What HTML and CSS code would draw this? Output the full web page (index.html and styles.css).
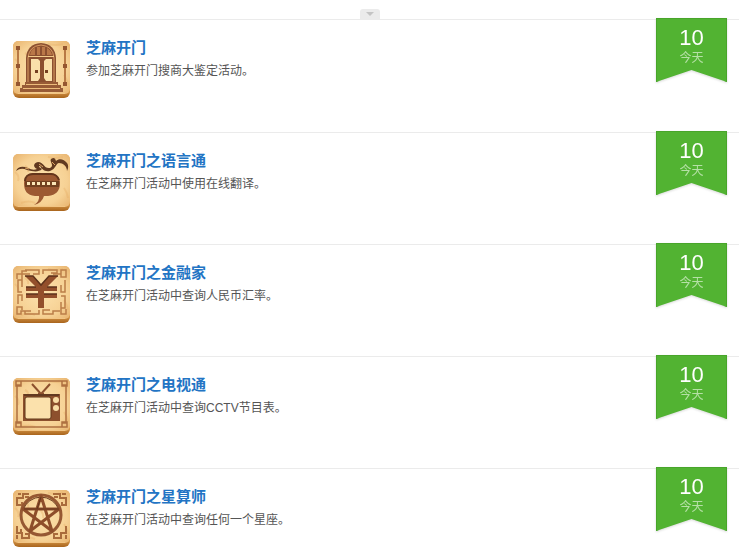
FILE: index.html
```
<!DOCTYPE html>
<html lang="zh-CN">
	<head>
		<meta charset="UTF-8">
		<meta name="viewport" content="width=device-width, initial-scale=1">
		<title>芝麻开门</title>
		<link rel="stylesheet" href="styles.css">
	</head>

	<body>
		<!-- shared wooden tile for the badges -->
		<svg class="defs" width="0" height="0" aria-hidden="true">
			<defs>
				<linearGradient id="edge" x1="0" y1="0" x2="0" y2="1">
					<stop offset="0" stop-color="#e0a85c"/>
					<stop offset="0.9" stop-color="#cf8f42"/>
					<stop offset="1" stop-color="#a9651d"/>
				</linearGradient>
				<radialGradient id="wood" cx="0.5" cy="0.5" r="0.75">
					<stop offset="0" stop-color="#fce2ad"/>
					<stop offset="0.6" stop-color="#f6d194"/>
					<stop offset="1" stop-color="#e5ad66"/>
				</radialGradient>
				<symbol id="tile" viewBox="0 0 57 57">
					<rect width="57" height="57" rx="6" fill="url(#edge)"/>
					<rect width="57" height="53" rx="5" fill="url(#wood)"/>
					<path d="M5 52.500H52" stroke="#f2c584" fill="none"/>
					<path d="M2 18q5 4 3 9M51 34q3 4 4 10M8 49q8-3 14 0M35 3q8 2 15 0M26 19q5 4 4 9M12 12q4 2 3 6" stroke="#e6ad63" stroke-width="2" opacity="0.35" fill="none"/>
				</symbol>
			</defs>
		</svg>

		<div class="header">
			<button class="toggle" type="button" aria-label="收起"></button>
		</div>

		<ul class="badges">
			<li class="badge">
				<svg class="icon" viewBox="0 0 57 57" aria-hidden="true">
					<use href="#tile"/>
					<path d="M13 41V17Q14 3 28 2Q42 3 43 17V41Z" fill="#8c5030"/>
					<path d="M15 41V17Q16 5 28 4Q40 5 41 17V41" fill="none" stroke="#d99b63"/>
					<path d="M17 14Q18 8 22 7V14ZM24 6H27V14H24ZM29 6H32V14H29ZM34 7Q38 9 39 14H34Z" fill="#ba7848"/>
					<path d="M15 15.500H41" stroke="#f4cc8b"/>
					<path d="M18 18H25L27 20V37L25 40H18ZM31 20L33 18H39V40H33L31 37Z" fill="#fae0aa"/>
					<path d="M22 29h3v3h-3zM32 29h3v3h-3z" fill="#754021"/>
					<path d="M12 41H45V44H48V47H50V51H7V47H9V44H12Z" fill="#985b36"/>
					<path d="M13 43.500H44M10 47.500H47" stroke="#edbc7b"/>
					<path d="M5 5V45M52 5V45" stroke="#b87945" stroke-width="2"/>
					<path d="M3 5h4v4H3zM3 23h4v4H3zM3 41h4v4H3zM50 5h4v4h-4zM50 23h4v4h-4zM50 41h4v4h-4z" fill="#955630"/>
				</svg>
				<div class="info">
					<h3><a href="#">芝麻开门</a></h3>
					<p>参加芝麻开门搜商大鉴定活动。</p>
				</div>
				<div class="ribbon">
					<div class="ribbon-body"><strong>10</strong><span>今天</span></div>
				</div>
			</li>

			<li class="badge">
				<svg class="icon" viewBox="0 0 57 57" aria-hidden="true">
					<use href="#tile"/>
					<path d="M3 17C5 12 10 12 15 14Q20 17 24 15C20 13 20 9 25 8C31 8 31 15 37 14C42 12 36 7 38 5Q42 2 43 7C46 4 51 5 54 9C56 12 55 15 54 17C54 12 50 9 46 9C43 9 43 15 37 17C31 18 29 15 27 12Q24 12 29 15C25 19 19 17 14 16Q8 13 3 17Z" fill="#623a20"/>
					<path d="M26 10l4 3M39 8l3 3M12 14l4 1" stroke="#dea563"/>
					<path d="M20 19H38C44 20 47 24 47 29C47 37 43 41 35 42H31Q29 49 21 51Q27 47 26 42H22C14 41 11 37 11 29C11 24 14 20 20 19Z" fill="#9c5932"/>
					<path d="M12 27C12 23 15 20 20 20H38C42 20 45 23 46 26" fill="none" stroke="#65361c" stroke-width="2"/>
					<path d="M12 27H46V33H12Z" fill="#71401f"/>
					<path d="M14 28h3v3h-3zM19 28h3v3h-3zM24 28h3v3h-3zM29 28h3v3h-3zM34 28h3v3h-3zM39 28h4v3h-4z" fill="#fbe6b7"/>
				</svg>
				<div class="info">
					<h3><a href="#">芝麻开门之语言通</a></h3>
					<p>在芝麻开门活动中使用在线翻译。</p>
				</div>
				<div class="ribbon">
					<div class="ribbon-body"><strong>10</strong><span>今天</span></div>
				</div>
			</li>

			<li class="badge">
				<svg class="icon" viewBox="0 0 57 57" aria-hidden="true">
					<use href="#tile"/>
					<path d="M17 8H9V5H14M12 4H26V8H20M30 8V4H44V7H38M40 8H48V4H53V11H48V8M52 14V26H48V19M48 30H52V42H48V36M48 39V48H53V43M47 45H40V48H30V44H37M26 44V48H12V45H18M16 45H8V48H4V41H9V44M5 38V29H9V35M9 26H5V14H9V21M9 17V8H4V13" fill="none" stroke="#bb7e48" stroke-width="1.500"/>
					<path d="M12 10H20L28 19L36 10H45L34 21H44V25H31V28H44V32H31V42H25V32H13V28H25V25H13V21H23Z" fill="#934f2b"/>
					<path d="M12 10H20L28 19L36 10H45M13 21H23M34 21H44M13 28H25M31 28H44" fill="none" stroke="#5d321b" stroke-width="1.500"/>
				</svg>
				<div class="info">
					<h3><a href="#">芝麻开门之金融家</a></h3>
					<p>在芝麻开门活动中查询人民币汇率。</p>
				</div>
				<div class="ribbon">
					<div class="ribbon-body"><strong>10</strong><span>今天</span></div>
				</div>
			</li>

			<li class="badge">
				<svg class="icon" viewBox="0 0 57 57" aria-hidden="true">
					<use href="#tile"/>
					<path d="M8 3H49V7H53V45H49V49H8V45H4V7H8ZM3 3H8V8H3ZM49 3H54V8H49ZM3 44H8V49H3ZM49 44H54V49H49Z" fill="none" stroke="#ae7040" stroke-width="1.500"/>
					<path d="M19 6L28 16L37 6M25 16H31" fill="none" stroke="#8d502d" stroke-width="2"/>
					<path d="M10 16H47V43H10Z" fill="#8d502d"/>
					<path d="M11 17H46" stroke="#623920" stroke-width="2"/>
					<rect x="12" y="19" width="26" height="22" rx="2" fill="#fbe1ac" stroke="#603619"/>
					<circle cx="43" cy="22" r="3" fill="#f9dda5"/>
					<circle cx="43" cy="30" r="3" fill="#f9dda5"/>
				</svg>
				<div class="info">
					<h3><a href="#">芝麻开门之电视通</a></h3>
					<p>在芝麻开门活动中查询CCTV节目表。</p>
				</div>
				<div class="ribbon">
					<div class="ribbon-body"><strong>10</strong><span>今天</span></div>
				</div>
			</li>

			<li class="badge">
				<svg class="icon" viewBox="0 0 57 57" aria-hidden="true">
					<use href="#tile"/>
					<path d="M16 4H10V8H4V15H9V12M5 4H8M40 4H47V8H53V15H49V12M49 4H53M4 36V43H9V48H16V44H12M4 45V49M53 36V43H48V48H41V44H45M53 45V49M12 7H16M41 7H45M8 39V42" fill="none" stroke="#a96b3b" stroke-width="2"/>
					<circle cx="28" cy="25" r="20" fill="none" stroke="#965832" stroke-width="3"/>
					<path d="M10 20A19 19 0 0 1 46 20" fill="none" stroke="#68391d"/>
					<path d="M28 6L39 41L10 19H46L17 41Z" fill="none" stroke="#8e4e2a" stroke-width="3" stroke-linejoin="round"/>
					<path d="M11 19H46M28 7L24 19" fill="none" stroke="#65371d"/>
				</svg>
				<div class="info">
					<h3><a href="#">芝麻开门之星算师</a></h3>
					<p>在芝麻开门活动中查询任何一个星座。</p>
				</div>
				<div class="ribbon">
					<div class="ribbon-body"><strong>10</strong><span>今天</span></div>
				</div>
			</li>
		</ul>
	</body>
</html>
```
FILE: styles.css
```
* {
	box-sizing: border-box;
	margin: 0;
	padding: 0;
}
html {
	scrollbar-width: none;
}
body {
	background: #fff;
	color: #555;
	font-family: "Liberation Sans", "Noto Sans CJK SC", sans-serif;
	font-size: 12px;
}
.defs {
	display: block;
}
.header {
	display: flex;
	justify-content: center;
	padding-top: 9px;
	border-bottom: 1px solid #ebebeb;
}
.toggle {
	display: flex;
	align-items: center;
	justify-content: center;
	width: 20px;
	height: 10px;
	border: none;
	border-radius: 3px 3px 0 0;
	background: #ebebeb;
	cursor: pointer;
}
.toggle::before {
	content: "";
	border: 4px solid transparent;
	border-top-color: #c4c4c4;
	border-bottom: none;
}
.badges {
	list-style: none;
}
.badge {
	display: flex;
	align-items: flex-start;
	min-height: 112px;
	padding: 0 12px 0 13px;
	border-bottom: 1px solid #ebebeb;
}
.badge:first-child {
	min-height: 113px;
}
.icon {
	flex: none;
	width: 57px;
	height: 57px;
	margin-top: 21px;
}
.info {
	flex: 1;
	padding: 16px 16px 0;
}
.info h3 {
	font-size: 15px;
	line-height: 24px;
}
.info a {
	color: #2274c4;
	text-decoration: none;
}
.info a:hover {
	text-decoration: underline;
}
.info p {
	line-height: 22px;
}

/* ribbon sits over the line above it */
.ribbon {
	flex: none;
	width: 71px;
	margin-top: -2px;
	filter: drop-shadow(0 1px 1px rgba(0, 0, 0, 0.15));
}
.ribbon-body {
	display: flex;
	flex-direction: column;
	align-items: center;
	height: 64px;
	padding-top: 8px;
	border: 1px solid #48a52a;
	background: #52b332;
	color: #fff;
	clip-path: polygon(0 0, 100% 0, 100% 100%, 50% 52px, 0 100%);
}
.ribbon strong {
	font-size: 22px;
	font-weight: normal;
	line-height: 22px;
}
.ribbon span {
	color: #b5e0a6;
	line-height: 18px;
}
```
